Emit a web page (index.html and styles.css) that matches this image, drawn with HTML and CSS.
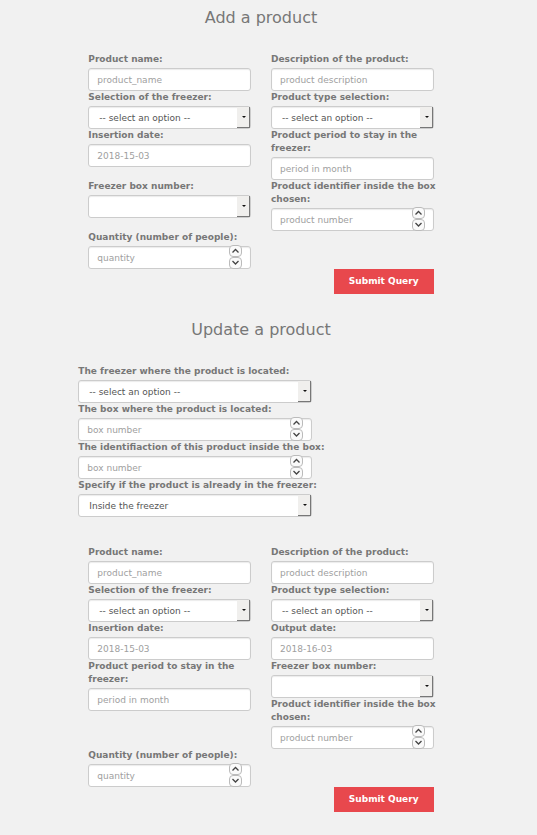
FILE: index.html
```
<!DOCTYPE html>
<html lang="en">
<head>
<meta charset="utf-8">
<title>Products</title>
<link rel="stylesheet" href="styles.css">
</head>
<body>
<svg class="defs" aria-hidden="true">
  <symbol id="up" viewBox="0 0 11 10"><path d="M2.5 6.5 5.5 3.5 8.5 6.5"/></symbol>
  <symbol id="down" viewBox="0 0 11 10"><path d="M2.5 3 5.5 6 8.5 3"/></symbol>
</svg>
<main>
  <section>
    <h1>Add a product</h1>
    <form class="fields">
      <div class="field"><label for="a-name">Product name:</label><input id="a-name" type="text" placeholder="product_name"></div>
      <div class="field"><label for="a-desc">Description of the product:</label><input id="a-desc" type="text" placeholder="product description"></div>
      <div class="field"><label for="a-freezer">Selection of the freezer:</label><div class="select"><select id="a-freezer"><option>-- select an option --</option></select></div></div>
      <div class="field"><label for="a-type">Product type selection:</label><div class="select"><select id="a-type"><option>-- select an option --</option></select></div></div>
      <div class="field"><label for="a-date">Insertion date:</label><input id="a-date" type="text" placeholder="2018-15-03"></div>
      <div class="field"><label for="a-period">Product period to stay in the freezer:</label><input id="a-period" type="text" placeholder="period in month"></div>
      <div class="field"><label for="a-box">Freezer box number:</label><div class="select"><select id="a-box"><option></option></select></div></div>
      <div class="field"><label for="a-id">Product identifier inside the box chosen:</label><div class="number"><input id="a-id" type="number" placeholder="product number"><div class="spin"><button type="button" aria-label="Increase"><svg><use href="#up"/></svg></button><button type="button" aria-label="Decrease"><svg><use href="#down"/></svg></button></div></div></div>
      <div class="field last"><label for="a-qty">Quantity (number of people):</label><div class="number"><input id="a-qty" type="number" placeholder="quantity"><div class="spin"><button type="button" aria-label="Increase"><svg><use href="#up"/></svg></button><button type="button" aria-label="Decrease"><svg><use href="#down"/></svg></button></div></div></div>
      <div class="actions"><button class="submit" type="submit">Submit Query</button></div>
    </form>
  </section>

  <section>
    <h1>Update a product</h1>
    <form>
      <div class="lookup">
        <div class="field"><label for="l-freezer">The freezer where the product is located:</label><div class="select"><select id="l-freezer"><option>-- select an option --</option></select></div></div>
        <div class="field"><label for="l-box">The box where the product is located:</label><div class="number"><input id="l-box" type="number" placeholder="box number"><div class="spin"><button type="button" aria-label="Increase"><svg><use href="#up"/></svg></button><button type="button" aria-label="Decrease"><svg><use href="#down"/></svg></button></div></div></div>
        <div class="field"><label for="l-id">The identifiaction of this product inside the box:</label><div class="number"><input id="l-id" type="number" placeholder="box number"><div class="spin"><button type="button" aria-label="Increase"><svg><use href="#up"/></svg></button><button type="button" aria-label="Decrease"><svg><use href="#down"/></svg></button></div></div></div>
        <div class="field"><label for="l-state">Specify if the product is already in the freezer:</label><div class="select"><select id="l-state"><option>Inside the freezer</option></select></div></div>
      </div>
      <div class="fields">
        <div class="column">
          <div class="field"><label for="u-name">Product name:</label><input id="u-name" type="text" placeholder="product_name"></div>
          <div class="field"><label for="u-freezer">Selection of the freezer:</label><div class="select"><select id="u-freezer"><option>-- select an option --</option></select></div></div>
          <div class="field"><label for="u-date">Insertion date:</label><input id="u-date" type="text" placeholder="2018-15-03"></div>
          <div class="field"><label for="u-period">Product period to stay in the freezer:</label><input id="u-period" type="text" placeholder="period in month"></div>
        </div>
        <div class="column">
          <div class="field"><label for="u-desc">Description of the product:</label><input id="u-desc" type="text" placeholder="product description"></div>
          <div class="field"><label for="u-type">Product type selection:</label><div class="select"><select id="u-type"><option>-- select an option --</option></select></div></div>
          <div class="field"><label for="u-out">Output date:</label><input id="u-out" type="text" placeholder="2018-16-03"></div>
          <div class="field"><label for="u-box">Freezer box number:</label><div class="select"><select id="u-box"><option></option></select></div></div>
          <div class="field"><label for="u-id">Product identifier inside the box chosen:</label><div class="number"><input id="u-id" type="number" placeholder="product number"><div class="spin"><button type="button" aria-label="Increase"><svg><use href="#up"/></svg></button><button type="button" aria-label="Decrease"><svg><use href="#down"/></svg></button></div></div></div>
        </div>
        <div class="field last"><label for="u-qty">Quantity (number of people):</label><div class="number"><input id="u-qty" type="number" placeholder="quantity"><div class="spin"><button type="button" aria-label="Increase"><svg><use href="#up"/></svg></button><button type="button" aria-label="Decrease"><svg><use href="#down"/></svg></button></div></div></div>
        <div class="actions"><button class="submit" type="submit">Submit Query</button></div>
      </div>
    </form>
  </section>
</main>
</body>
</html>
```
FILE: styles.css
```
* {
  box-sizing: border-box;
}

body {
  margin: 0;
  background: #f1f1f1;
  color: #777;
  font: 9px/13px "DejaVu Sans", sans-serif;
}

.defs {
  display: none;
}

main {
  padding: 8px 15px 20px 0;
}

section {
  width: 70%;
  margin: 0 auto 26px;
}

section:last-child {
  margin-bottom: 0;
}

h1 {
  margin: 0 0 25px;
  font-size: 16px;
  line-height: 20px;
  font-weight: 400;
  text-align: center;
}

.fields {
  display: grid;
  grid-template-columns: 1fr 1fr;
  column-gap: 20px;
  padding: 0 10px;
}

.lookup {
  width: 64%;
  margin-bottom: 29px;
}

label {
  display: block;
  margin: 0 -8px 2px 0;
  font-weight: 700;
}

.lookup label {
  white-space: nowrap;
}

input,
select {
  display: block;
  width: 100%;
  height: 23px;
  margin: 0;
  padding: 0 8px;
  border: 1px solid #ccc;
  border-radius: 3px;
  background: #fff;
  box-shadow: inset 0 1px 1px rgba(0, 0, 0, 0.08);
  color: #555;
  font: inherit;
  appearance: none;
}

input[type="number"] {
  appearance: textfield;
}

select {
  padding: 1px 10px 0;
}

input::placeholder {
  color: #a0a0a0;
  opacity: 1;
}

.select,
.number {
  position: relative;
}

.select::before {
  content: "";
  position: absolute;
  top: 1px;
  right: 1px;
  bottom: 1px;
  width: 12px;
  border-right: 1px solid #777;
  border-bottom: 1px solid #777;
  background: #f0efed;
  pointer-events: none;
}

.select::after {
  content: "";
  position: absolute;
  top: 10px;
  right: 5px;
  border: 2px solid transparent;
  border-top-color: #111;
  border-bottom: 0;
  pointer-events: none;
}

.spin {
  position: absolute;
  top: -1px;
  right: 9px;
  display: grid;
}

.spin button {
  display: block;
  width: 13px;
  height: 12px;
  padding: 0;
  border: 1px solid #bbb;
  border-radius: 4px;
  background: #fafafa;
}

.spin svg {
  display: block;
  width: 11px;
  height: 10px;
  fill: none;
  stroke: #444;
  stroke-width: 1.3;
}

.last {
  grid-column: 1;
}

.actions {
  grid-column: 1 / -1;
  display: flex;
  justify-content: flex-end;
}

.submit {
  width: 100px;
  height: 25px;
  padding: 0;
  border: 0;
  background: #e8484d;
  color: #fff;
  font: inherit;
  font-weight: 700;
}
```
